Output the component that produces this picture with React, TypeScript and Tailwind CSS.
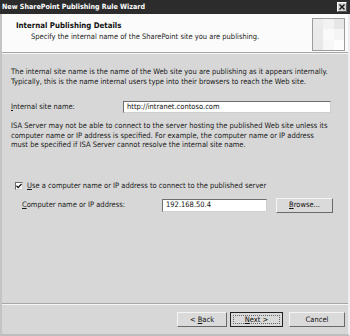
import React from 'react';

const font = "font-['DejaVu_Sans_Condensed','Liberation_Sans',sans-serif]";

const U = ({ children }: { children: React.ReactNode }) => <span className="underline">{children}</span>;

const WinButton = ({ children, isDefault = false, className = '' }: { children: React.ReactNode; isDefault?: boolean; className?: string }) => (
  <div
    className={`h-[15px] flex items-center justify-center bg-[#dadada] text-[7.5px] leading-none text-[#111] ${
      isDefault ? 'border border-[#222]' : 'border border-t-[#f4f4f4] border-l-[#f4f4f4] border-r-[#6a6a6a] border-b-[#6a6a6a]'
    } ${className}`}
  >
    {isDefault ? (
      <div className="w-[calc(100%-4px)] h-[calc(100%-4px)] flex items-center justify-center border border-dotted border-[#666]">{children}</div>
    ) : (
      children
    )}
  </div>
);

const TextBox = ({ value, className = '' }: { value: string; className?: string }) => (
  <div className={`bg-white border border-[#6e6e6e] border-b-[#cfcfcf] border-r-[#cfcfcf] flex items-center pl-[3px] text-[7.5px] leading-none text-[#111] ${className}`}>
    {value}
  </div>
);

export default function App() {
  return (
    <div className={`w-[350px] h-[336px] flex flex-col bg-[#d7d7d7] ${font} overflow-hidden`}>
      {/* title bar */}
      <div className="h-[14px] bg-[#2c2c2c] flex items-center justify-between pl-[2px] pr-[3px]">
        <span className="text-white font-bold text-[7.1px] leading-none">New SharePoint Publishing Rule Wizard</span>
        <div className="w-[10px] h-[10px] bg-[#d4d4d4] flex items-center justify-center border border-t-white border-l-white border-r-[#555] border-b-[#555]">
          <svg width="6" height="6" viewBox="0 0 6 6">
            <path d="M0.5 0.5L5.5 5.5M5.5 0.5L0.5 5.5" stroke="#111" strokeWidth="1.4" />
          </svg>
        </div>
      </div>

      <div className="flex-1 flex flex-col border-l-2 border-l-[#c4c4c4] border-r-2 border-r-[#eeeeee] border-b-2 border-b-[#bdbdbd]">
        {/* header */}
        <div className="h-[38px] bg-[#fbfbfb] flex justify-between">
          <div className="pl-[14px] pt-[7px] flex flex-col">
            <span className="font-bold text-[7.8px] leading-[10px] text-[#111]">Internal Publishing Details</span>
            <span className="pl-[15px] text-[7.5px] leading-[11px] text-[#222]">
              Specify the internal name of the SharePoint site you are publishing.
            </span>
          </div>
          <div className="mt-[4px] mr-[3px] w-[33px] h-[33px] border border-[#9c9c9c] bg-[#ededed] grid grid-cols-3 grid-rows-3">
            <div className="bg-[#ececec]" />
            <div className="bg-[#f2f2f2]" />
            <div className="bg-[#e6e6e6]" />
            <div className="bg-[#eaeaea]" />
            <div className="bg-[#fafafa]" />
            <div className="bg-[#f5f5f5]" />
            <div className="bg-[#e8e8e8]" />
            <div className="bg-[#f7f7f7]" />
            <div className="bg-[#fdfdfd]" />
          </div>
        </div>
        <div className="h-[1px] bg-[#a6a6a6]" />
        <div className="h-[1px] bg-[#f5f5f5]" />

        {/* body */}
        <div className="flex-1 flex flex-col px-[9px] text-[7.5px] text-[#1a1a1a]">
          <p className="mt-[13px] leading-[10px]">
            The internal site name is the name of the Web site you are publishing as it appears internally.
            <br />
            Typically, this is the name internal users type into their browsers to reach the Web site.
          </p>

          <div className="mt-[14px] flex items-center h-[12px]">
            <span className="w-[112px]">
              <U>I</U>nternal site name:
            </span>
            <TextBox value="http://intranet.contoso.com" className="w-[208px] h-[12px]" />
          </div>

          <p className="mt-[8px] leading-[9.5px]">
            ISA Server may not be able to connect to the server hosting the published Web site unless its
            <br />
            computer name or IP address is specified. For example, the computer name or IP address
            <br />
            must be specified if ISA Server cannot resolve the internal site name.
          </p>

          <div className="mt-[31px] flex items-center h-[10px] pl-[4px]">
            <div className="w-[8px] h-[8px] bg-white border border-[#6a6a6a] border-b-[#d0d0d0] border-r-[#d0d0d0] flex items-center justify-center">
              <svg width="6" height="6" viewBox="0 0 6 6">
                <path d="M0.5 2.8L2.2 4.6L5.5 1" stroke="#111" strokeWidth="1.3" fill="none" />
              </svg>
            </div>
            <span className="ml-[4px]">
              <U>U</U>se a computer name or IP address to connect to the published server
            </span>
          </div>

          <div className="mt-[8px] flex items-center h-[13px] pl-[11px]">
            <span className="w-[140px]">
              <U>C</U>omputer name or IP address:
            </span>
            <TextBox value="192.168.50.4" className="w-[105px] h-[13px]" />
            <WinButton className="ml-[9px] w-[57px] h-[13px]">
              <span>
                <U>B</U>rowse...
              </span>
            </WinButton>
          </div>

          <div className="flex-1" />
        </div>

        <div className="h-[1px] bg-[#a6a6a6]" />
        <div className="h-[1px] bg-[#f5f5f5]" />

        <div className="h-[29px] flex items-start justify-end pt-[7px] pr-[3px] gap-[3px]">
          <WinButton className="w-[50px]">
            <span>
              &lt; <U>B</U>ack
            </span>
          </WinButton>
          <WinButton isDefault className="w-[53px]">
            <span>
              <U>N</U>ext &gt;
            </span>
          </WinButton>
          <WinButton className="ml-[3px] w-[56px]">
            <span>Cancel</span>
          </WinButton>
        </div>
      </div>
    </div>
  );
}
